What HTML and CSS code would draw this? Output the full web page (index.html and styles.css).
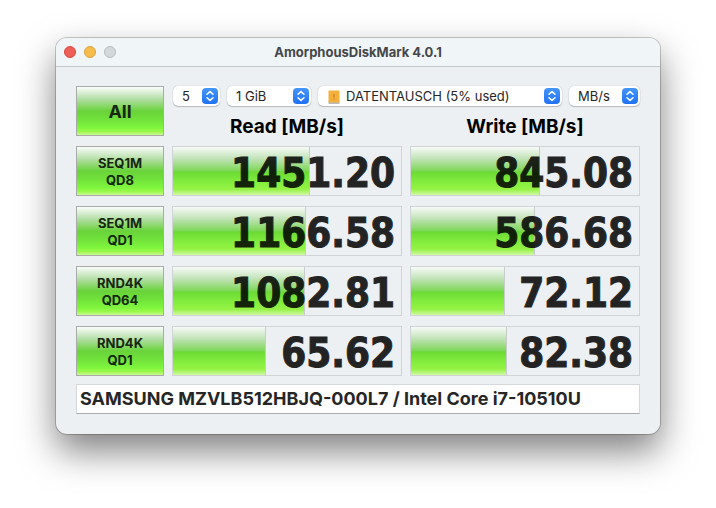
FILE: index.html
```html
<!DOCTYPE html>
<html lang="en">
<head>
  <meta charset="UTF-8">
  <meta name="viewport" content="width=device-width, initial-scale=1.0">
  <title>AmorphousDiskMark 4.0.1</title>
  <link rel="stylesheet" href="styles.css">
</head>
<body>
  <svg class="symbols" aria-hidden="true">
    <symbol id="chevrons" viewBox="0 0 16 16">
      <path d="M5 6.3 L8 3.6 L11 6.3 M5 9.7 L8 12.4 L11 9.7" fill="none" stroke="#fff" stroke-width="1.5" stroke-linecap="round" stroke-linejoin="round"/>
    </symbol>
  </svg>

  <main class="window">
    <header class="titlebar">
      <div class="lights">
        <button type="button" class="light close" aria-label="Close"></button>
        <button type="button" class="light minimize" aria-label="Minimize"></button>
        <button type="button" class="light zoom" aria-label="Zoom" disabled></button>
      </div>
      <h1 class="title">AmorphousDiskMark 4.0.1</h1>
    </header>

    <div class="content">
      <div class="grid">
        <button type="button" class="test all">All</button>
        <div class="top">
          <div class="controls">
            <div class="popup count">
              <select aria-label="Test count"><option>5</option></select>
              <svg class="arrows"><use href="#chevrons"/></svg>
            </div>
            <div class="popup size">
              <select aria-label="Test size"><option>1 GiB</option></select>
              <svg class="arrows"><use href="#chevrons"/></svg>
            </div>
            <div class="popup drive">
              <svg class="disk" viewBox="0 0 12 14">
                <rect x="0.5" y="11" width="11" height="3" rx="0.5" fill="#b9bbbe"/>
                <rect x="0.5" y="0.5" width="11" height="12" rx="0.5" fill="#f3b13c"/>
                <path d="M6 4v3.5M6 8.5v1" stroke="#d9822b" stroke-width="1.4"/>
              </svg>
              <select aria-label="Drive"><option>DATENTAUSCH (5% used)</option></select>
              <svg class="arrows"><use href="#chevrons"/></svg>
            </div>
            <div class="popup unit">
              <select aria-label="Unit"><option>MB/s</option></select>
              <svg class="arrows"><use href="#chevrons"/></svg>
            </div>
          </div>
          <div class="headings">
            <h2>Read [MB/s]</h2>
            <h2>Write [MB/s]</h2>
          </div>
        </div>

        <button type="button" class="test">SEQ1M<br>QD8</button>
        <div class="result"><div class="bar" style="width: 60%"></div><span class="value">1451.20</span></div>
        <div class="result"><div class="bar" style="width: 56.6%"></div><span class="value">845.08</span></div>

        <button type="button" class="test">SEQ1M<br>QD1</button>
        <div class="result"><div class="bar" style="width: 58.5%"></div><span class="value">1166.58</span></div>
        <div class="result"><div class="bar" style="width: 54.4%"></div><span class="value">586.68</span></div>

        <button type="button" class="test">RND4K<br>QD64</button>
        <div class="result"><div class="bar" style="width: 58%"></div><span class="value">1082.81</span></div>
        <div class="result"><div class="bar" style="width: 41.4%"></div><span class="value">72.12</span></div>

        <button type="button" class="test">RND4K<br>QD1</button>
        <div class="result"><div class="bar" style="width: 40.8%"></div><span class="value">65.62</span></div>
        <div class="result"><div class="bar" style="width: 42.1%"></div><span class="value">82.38</span></div>
      </div>

      <input type="text" class="comment" aria-label="Comment" value="SAMSUNG MZVLB512HBJQ-000L7 / Intel Core i7-10510U">
    </div>
  </main>
</body>
</html>
```
FILE: styles.css
```css
* {
  box-sizing: border-box;
}
body {
  min-height: 100vh;
  margin: 0;
  padding: 38px 56px;
  background: #fff;
  font-family: Inter, "Liberation Sans", sans-serif;
  font-size: 13px;
  color: #262626;
}
.symbols {
  display: none;
}
.window {
  background: #ecf0f3;
  border-radius: 11px;
  box-shadow: 0 0 0 1px rgba(0, 0, 0, 0.2), 0 17px 36px rgba(0, 0, 0, 0.5);
}

/* title bar */
.titlebar {
  display: grid;
  grid-template-columns: 1fr auto 1fr;
  align-items: center;
  height: 29px;
  padding: 0 8px;
  background: #f0f5f8;
  border-bottom: 1px solid #c5c9cc;
  border-radius: 11px 11px 0 0;
}
.lights {
  display: flex;
  gap: 8px;
}
.light {
  width: 12px;
  height: 12px;
  padding: 0;
  border: 1px solid;
  border-radius: 50%;
}
.close {
  background: #ed5f57;
  border-color: #d9473f;
}
.minimize {
  background: #f5bd4d;
  border-color: #dba03a;
}
.zoom {
  background: #d3d8db;
  border-color: #b8bdc0;
}
.title {
  margin: 0;
  font-size: 13px;
  font-weight: 700;
  color: #454749;
}

/* benchmark grid */
.content {
  padding: 19px 20px 20px;
}
.grid {
  display: grid;
  grid-template-columns: 88px 1fr 1fr;
  grid-auto-rows: 50px;
  gap: 10px 8px;
}
.test {
  padding: 2px 0 0;
  border: 1px solid #a9abab;
  background: linear-gradient(#fafcfa 0%, #b4dea6 25%, #69d33a 50%, #6fdf3a 65%, #80f63e 85%, #9bf84b 93%, #ccfa93 100%);
  font-family: inherit;
  font-size: 13px;
  font-weight: 700;
  line-height: 17px;
  color: #16260f;
}
.all {
  padding: 0;
  font-size: 18px;
}
.top {
  grid-column: span 2;
}
.controls {
  display: flex;
  gap: 7px;
  padding-left: 1px;
}
.popup {
  position: relative;
  height: 20px;
}
.popup select {
  display: block;
  width: 100%;
  height: 20px;
  padding: 0 24px 0 9px;
  border: 0;
  border-radius: 5px;
  background: #fff;
  box-shadow: 0 0 1px rgba(0, 0, 0, 0.3), 0 1px 1px rgba(0, 0, 0, 0.2);
  appearance: none;
  font-family: inherit;
  font-size: 13px;
  color: #262626;
}
.count {
  width: 47px;
}
.size {
  width: 84px;
}
.drive {
  flex: 1;
}
.unit {
  width: 71px;
}
.popup.drive select {
  padding-left: 28px;
}
.arrows {
  position: absolute;
  top: 2px;
  right: 2px;
  width: 16px;
  height: 16px;
  border-radius: 4px;
  background: linear-gradient(#4596fb, #1f71f3);
  pointer-events: none;
}
.disk {
  position: absolute;
  top: 4px;
  left: 10px;
  width: 12px;
  height: 14px;
}
.headings {
  display: grid;
  grid-template-columns: 1fr 1fr;
  gap: 8px;
  margin-top: 9px;
}
.headings h2 {
  margin: 0;
  font-size: 19px;
  font-weight: 700;
  line-height: 24px;
  text-align: center;
  color: #000;
}

/* result cells */
.result {
  position: relative;
  border: 1px solid #d0d4d7;
}
.bar {
  height: 100%;
  border-right: 1px solid #c8cccd;
  background: linear-gradient(#f7faf8 0%, #c0e2b5 25%, #7fd85a 49%, #6cdb35 52%, #86ee3f 75%, #95f244 88%, #d0f9a4 100%);
}
.value {
  position: absolute;
  top: 0;
  right: 6px;
  font-family: "DejaVu Sans Condensed", "DejaVu Sans", sans-serif;
  font-size: 40px;
  font-weight: 700;
  line-height: 52px;
  color: #000;
  -webkit-text-stroke: 1px #000;
  opacity: 0.85;
}

.comment {
  display: block;
  width: 100%;
  height: 30px;
  margin-top: 8px;
  padding: 0 3px 2px;
  border: 1px solid #d5d9dc;
  border-bottom-color: #a8acae;
  background: #fff;
  font-family: inherit;
  font-size: 18px;
  font-weight: 700;
  color: #262626;
}
```
